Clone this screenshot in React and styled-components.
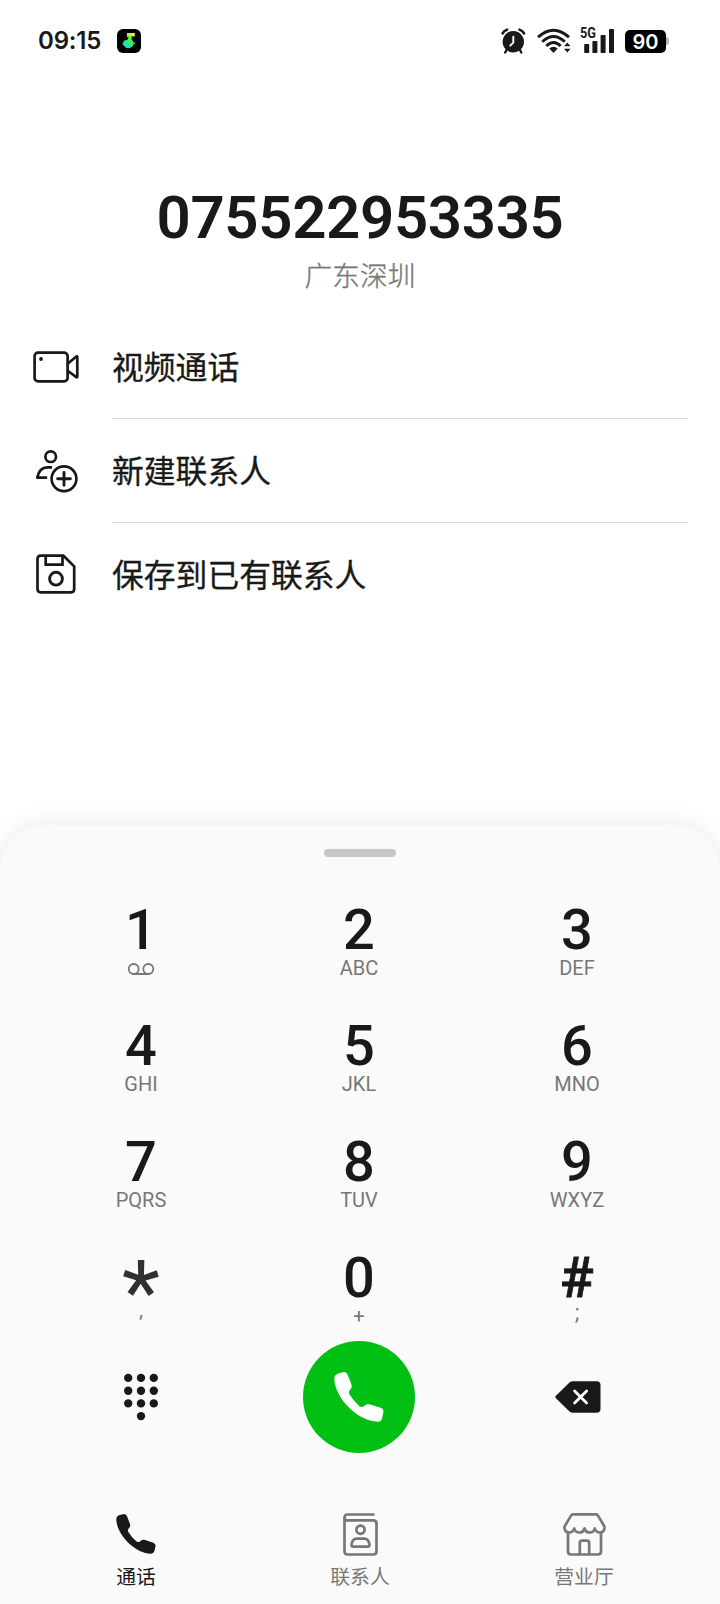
import React from 'react';
import styled, { createGlobalStyle } from 'styled-components';

const INK = '#191919';
const GREY = '#777777';

const GlobalStyle = createGlobalStyle`
  * { box-sizing: border-box; }
  body {
    margin: 0;
    background: #fff;
    color: ${INK};
    font-family: Roboto, 'Noto Sans CJK SC', sans-serif;
  }
  svg { display: block; flex: none; overflow: visible; }
`;

const Screen = styled.main`
  width: 720px;
  height: 1604px;
  display: flex;
  flex-direction: column;
  overflow: hidden;
  background: #fff;
`;

const StatusBar = styled.header`
  height: 84px;
  padding: 0 51px 2px 38px;
  display: flex;
  align-items: center;
`;

const Clock = styled.time`
  width: 79px;
  font: 600 24px/30px Inter, sans-serif;
  letter-spacing: -0.2px;
  white-space: nowrap;
`;

const StatusIcons = styled.div`
  margin-left: auto;
  display: flex;
  align-items: center;
`;

const Signal = styled.div`
  position: relative;
  margin-left: 9px;
  width: 35px;
  height: 26px;
`;

const NetworkLabel = styled.span`
  position: absolute;
  left: 0;
  top: 0;
  font: 700 14.5px/12px Roboto, sans-serif;
  transform: scaleX(0.88);
  transform-origin: left;
`;

const Battery = styled.div`
  margin-left: 10px;
  display: flex;
  align-items: center;
`;

const BatteryBody = styled.div`
  width: 41px;
  height: 23px;
  border-radius: 5px;
  background: #000;
  color: #fff;
  text-align: center;
  font: 600 20px/24px Inter, sans-serif;
`;

const BatteryTip = styled.div`
  width: 3px;
  height: 8px;
  border-radius: 0 4px 4px 0;
  background: #b5b5b5;
`;

const Dialed = styled.section`
  height: 230px;
  padding-top: 99px;
  text-align: center;
`;

const PhoneNumber = styled.h1`
  margin: 0;
  font-size: 60px;
  line-height: 70px;
  font-weight: 600;
  letter-spacing: -0.36px;
`;

const Region = styled.p`
  margin: 4px 0 0;
  font-size: 27.7px;
  line-height: 40px;
  font-weight: 300;
  color: ${GREY};
  -webkit-text-stroke: 0.35px ${GREY};
`;

const Actions = styled.ul`
  margin: 0;
  padding: 0 32px 0 33px;
  list-style: none;
  height: 511px;
`;

const Action = styled.li`
  height: 104px;
  display: flex;
`;

const ActionIcon = styled.span`
  width: 79px;
  padding-top: 2px;
  display: flex;
  align-items: center;
`;

const ActionLabel = styled.span`
  flex: 1;
  height: 105px;
  padding-top: 5px;
  font-size: 31.8px;
  line-height: 99px;
  border-bottom: 1px solid ${(p) => (p.$last ? 'transparent' : '#dcdcdc')};
  -webkit-text-stroke: 0.3px ${INK};
`;

const Sheet = styled.section`
  height: 779px;
  border-radius: 46px 46px 0 0;
  background: #fafafa;
  box-shadow: 0 0 26px rgba(0, 0, 0, 0.09);
  display: flex;
  flex-direction: column;
`;

const Handle = styled.div`
  width: 72px;
  height: 8px;
  margin: 24px auto 0;
  border-radius: 4px;
  background: #c7c7c7;
`;

const Keypad = styled.div`
  margin: 39px 0 0 32px;
  width: 654px;
  display: grid;
  grid-template-columns: repeat(3, 218px);
  grid-auto-rows: 116px;
`;

const Key = styled.button`
  border: 0;
  padding: 0;
  background: none;
  color: inherit;
  font-family: inherit;
  display: flex;
  flex-direction: column;
  align-items: center;
`;

const Digit = styled.span`
  height: 60px;
  padding-top: 8px;
  font-size: ${(p) => (p.$star ? 88 : 56)}px;
  line-height: ${(p) => (p.$star ? 79 : 52)}px;
  font-weight: ${(p) => (p.$star ? 400 : 500)};
  color: ${(p) => (p.$star ? '#303030' : INK)};
  -webkit-text-stroke: ${(p) => (p.$heavy ? 0.8 : 0)}px ${INK};
`;

const Letters = styled.span`
  height: 24px;
  margin-top: ${(p) => p.$shift || 0}px;
  font-size: ${(p) => p.$size || 20}px;
  line-height: 24px;
  color: ${GREY};
`;

const Controls = styled.div`
  margin: -19px 0 0 32px;
  width: 654px;
  height: 112px;
  display: grid;
  grid-template-columns: repeat(3, 218px);
  place-items: center;
`;

const CallButton = styled.button`
  width: 112px;
  height: 112px;
  padding: 0;
  border: 0;
  border-radius: 50%;
  background: #00bf13;
  color: #fff;
  display: grid;
  place-items: center;
`;

const Tabs = styled.nav`
  margin-top: 59px;
  padding: 0 24px;
  display: grid;
  grid-template-columns: repeat(3, 1fr);
`;

const Tab = styled.a`
  display: flex;
  flex-direction: column;
  align-items: center;
  color: ${(p) => (p.$active ? INK : GREY)};
  font-size: 19.8px;
  line-height: 28px;
`;

const TabIcon = styled.span`
  height: 44px;
  margin-bottom: 8px;
  display: grid;
  place-items: center;
`;

const line = (width) => ({
  fill: 'none',
  stroke: 'currentColor',
  strokeWidth: width,
  strokeLinecap: 'round',
  strokeLinejoin: 'round',
});

const MusicAppIcon = () => (
  <svg width="24" height="24" viewBox="0 0 24 24">
    <defs>
      <linearGradient id="note" x1="0.8" y1="0" x2="0.3" y2="1">
        <stop offset="0" stopColor="#f4f52a" />
        <stop offset="0.45" stopColor="#45ee4d" />
        <stop offset="1" stopColor="#12dcd0" />
      </linearGradient>
    </defs>
    <rect width="24" height="24" rx="6" />
    <path d="M9.9 4h7.9v3.6h-3.3l.3 3.4 1.5 1.6-.3 1h2.2v1.2l-1.500.3a5.400 5.400 0 0 1-9.900 1.400L5 15.300l1.400-.6-.9-2h1.400l.2-1.200 3.200-.6 1.300-2.700H9.900z" fill="url(#note)" />
  </svg>
);

const AlarmIcon = () => (
  <svg width="25" height="26" viewBox="0 0 25 26">
    <circle cx="12.3" cy="13.8" r="10.7" fill="currentColor" />
    <path d="M1.6 5.4Q3 2.6 6 1.7M18.6 1.7Q21.7 2.6 23 5.4" {...line(2.7)} />
    <path d="M5.5 22l-1.3 2.5M19 22l1.3 2.5" {...line(2.4)} />
    <path d="M12.3 8.6v6L9.3 17.5" {...line(1.9)} stroke="#fff" />
  </svg>
);

const WifiIcon = () => (
  <svg width="34" height="26" viewBox="0 0 34 26" style={{ marginLeft: 11 }}>
    <g {...line(2.9)} strokeLinecap="butt">
      <path d="M1 9.2Q16.5-4.8 32 9.2" />
      <path d="M5.2 13.8Q16.5 3.4 27.8 13.8" />
      <path d="M9.3 18Q16.5 11 23.7 18" />
    </g>
    <path d="M12.3 20.4q4.2-3.4 8.4 0l-4.2 4.5z" fill="currentColor" />
    <path d="M27 18.2l3.3-3.6 3.3 3.6zM27 20.8h6.6l-3.3 3.6z" fill="currentColor" />
  </svg>
);

const SignalBars = () => (
  <svg width="35" height="26" viewBox="0 0 35 26" fill="currentColor">
    <rect x="4.2" y="16" width="5" height="9" rx=".8" />
    <rect x="12.4" y="13" width="5" height="12" rx=".8" />
    <rect x="20.6" y="7" width="5" height="18" rx=".8" />
    <rect x="29" y="1" width="5" height="24" rx=".8" />
  </svg>
);

const VideoIcon = () => (
  <svg width="46" height="32" viewBox="0 0 46 32">
    <rect x="1.6" y="1.6" width="33" height="28.8" rx="3.5" {...line(2.7)} />
    <circle cx="8" cy="8" r="1.9" fill="currentColor" />
    <path d="M35 12.5L43 5.7q1.3-1 1.3.6v19q0 1.6-1.3.6L35 20" {...line(2.7)} />
  </svg>
);

const NewContactIcon = () => (
  <svg width="46" height="42" viewBox="0 0 46 42">
    <g {...line(2.7)}>
      <circle cx="17.7" cy="6.7" r="5.3" />
      <path d="M19 17.3h-4.5C9 17.3 5.5 21.5 4.2 27.6h10" strokeLinecap="butt" />
      <circle cx="31" cy="28.8" r="12.4" />
      <path d="M24.6 28.8h12.8M31 22.4v12.8" strokeWidth="2.9" />
    </g>
  </svg>
);

const SaveIcon = () => (
  <svg width="46" height="40" viewBox="0 0 46 40" style={{ marginTop: -2 }}>
    <g {...line(2.7)}>
      <path d="M7.8 1.7H30.5L41.2 12.4V35q0 3.3-3.3 3.3H7.8q-3.3 0-3.3-3.3V5q0-3.3 3.3-3.3z" />
      <path d="M12.7 2v8.7h16.8V2" strokeLinejoin="miter" />
      <circle cx="23" cy="24.7" r="6.4" strokeWidth="2.9" />
    </g>
  </svg>
);

const VoicemailGlyph = styled.svg`
  margin-top: 7px;
  color: ${GREY};
`;

const VoicemailIcon = () => (
  <VoicemailGlyph width="26" height="12" viewBox="0 0 26 12">
    <g {...line(1.8)}>
      <circle cx="5.7" cy="6" r="5" />
      <circle cx="20.3" cy="6" r="5" />
      <path d="M5.7 11h14.6" />
    </g>
  </VoicemailGlyph>
);

const HandsetIcon = ({ size }) => (
  <svg width={size} height={size} viewBox="0 0 150 152">
    <path
      d="M0 22Q-1 10 10 5L26 1Q36-2 41 9L52 38Q54 45 51 50L45 58Q43 63 46 68Q58 88 76 104Q83 108 89 105L97 99Q102 97 107 98L141 109Q151 113 149 123L145 141Q142 151 132 151C70 149 3 80 0 22Z"
      fill="currentColor"
    />
  </svg>
);

const DialpadIcon = () => (
  <svg width="34" height="47" viewBox="0 0 34 47" fill="currentColor">
    {[4.2, 17, 29.8].map((x) =>
      [3.9, 16.7, 29.4].map((y) => <circle key={`${x}-${y}`} cx={x} cy={y} r="4.2" />)
    )}
    <circle cx="17" cy="42.1" r="4.2" />
  </svg>
);

const BackspaceIcon = () => (
  <svg width="46" height="32" viewBox="0 0 46 32" style={{ marginLeft: 2 }}>
    <path d="M.7 15L14.5 1.5Q16 .2 18 .2H41.5Q45.5.2 45.5 4.2V27.8Q45.5 31.8 41.5 31.8H18Q16 31.8 14.5 30.5L.7 17Q-.3 16 .7 15z" fill="currentColor" />
    <path d="M19.6 10l12 12M31.6 10l-12 12" {...line(2.8)} stroke="#fff" />
  </svg>
);

const ContactsIcon = () => (
  <svg width="35" height="43" viewBox="0 0 35 43">
    <g {...line(2.7)}>
      <path d="M30.5 1.5H4.5q-3 0-3 3.2v33.6q0 3.2 3.2 3.2h25.6q3.2 0 3.2-3.2V10.5q0-3.2-3.2-3.2H4.5q-3 0-3-2.6" />
      <circle cx="17.5" cy="16.7" r="4.1" />
      <path d="M13.6 25.7h7.8q3.7 0 5 5.200.6 2.800-1.600 2.800H10.200q-2.200 0-1.600-2.800 1.300-5.200 5-5.200z" />
    </g>
  </svg>
);

const StoreIcon = () => (
  <svg width="43" height="43" viewBox="0 0 43 43">
    <g {...line(2.7)}>
      <path d="M9.8 1.4h23.4q1 0 1.6 1L41 12.7c1.5 3-.5 6.8-4 6.8-2.6 0-4.5-1.3-5.2-4-.7 2.7-2.7 4-5.1 4s-4.4-1.3-5.2-4c-.8 2.7-2.7 4-5.1 4s-4.5-1.3-5.2-4c-.7 2.7-2.6 4-5.2 4-3.5 0-5.5-3.8-4-6.800L8.200 2.400q.6-1 1.600-1z" />
      <path d="M5 20v18.5q0 3 3 3h27q3 0 3-3V20" />
      <path d="M16.8 41V30q0-2.3 2.3-2.3h4.8q2.3 0 2.3 2.3v11" />
    </g>
  </svg>
);

const KEYS = [
  { digit: '1', voicemail: true },
  { digit: '2', letters: 'ABC' },
  { digit: '3', letters: 'DEF' },
  { digit: '4', letters: 'GHI' },
  { digit: '5', letters: 'JKL' },
  { digit: '6', letters: 'MNO' },
  { digit: '7', letters: 'PQRS' },
  { digit: '8', letters: 'TUV' },
  { digit: '9', letters: 'WXYZ' },
  { digit: '*', letters: ',', shift: -6, size: 20 },
  { digit: '0', letters: '+', size: 20 },
  { digit: '#', letters: ';', shift: -3, size: 22 },
];

const ACTIONS = [
  { label: '视频通话', Icon: VideoIcon },
  { label: '新建联系人', Icon: NewContactIcon },
  { label: '保存到已有联系人', Icon: SaveIcon },
];

export default function App() {
  return (
    <Screen>
      <GlobalStyle />
      <StatusBar>
        <Clock>09:15</Clock>
        <MusicAppIcon />
        <StatusIcons>
          <AlarmIcon />
          <WifiIcon />
          <Signal>
            <SignalBars />
            <NetworkLabel>5G</NetworkLabel>
          </Signal>
          <Battery>
            <BatteryBody>90</BatteryBody>
            <BatteryTip />
          </Battery>
        </StatusIcons>
      </StatusBar>

      <Dialed>
        <PhoneNumber>075522953335</PhoneNumber>
        <Region>广东深圳</Region>
      </Dialed>

      <Actions>
        {ACTIONS.map(({ label, Icon }, i) => (
          <Action key={label}>
            <ActionIcon><Icon /></ActionIcon>
            <ActionLabel $last={i === ACTIONS.length - 1}>{label}</ActionLabel>
          </Action>
        ))}
      </Actions>

      <Sheet>
        <Handle />
        <Keypad>
          {KEYS.map((k) => (
            <Key key={k.digit}>
              <Digit $star={k.digit === '*'} $heavy={k.digit === '#'}>{k.digit}</Digit>
              {k.voicemail ? <VoicemailIcon /> : <Letters $shift={k.shift} $size={k.size}>{k.letters}</Letters>}
            </Key>
          ))}
        </Keypad>
        <Controls>
          <DialpadIcon />
          <CallButton><HandsetIcon size={50} /></CallButton>
          <BackspaceIcon />
        </Controls>
        <Tabs>
          <Tab $active><TabIcon><HandsetIcon size={40} /></TabIcon>通话</Tab>
          <Tab><TabIcon><ContactsIcon /></TabIcon>联系人</Tab>
          <Tab><TabIcon><StoreIcon /></TabIcon>营业厅</Tab>
        </Tabs>
      </Sheet>
    </Screen>
  );
}
